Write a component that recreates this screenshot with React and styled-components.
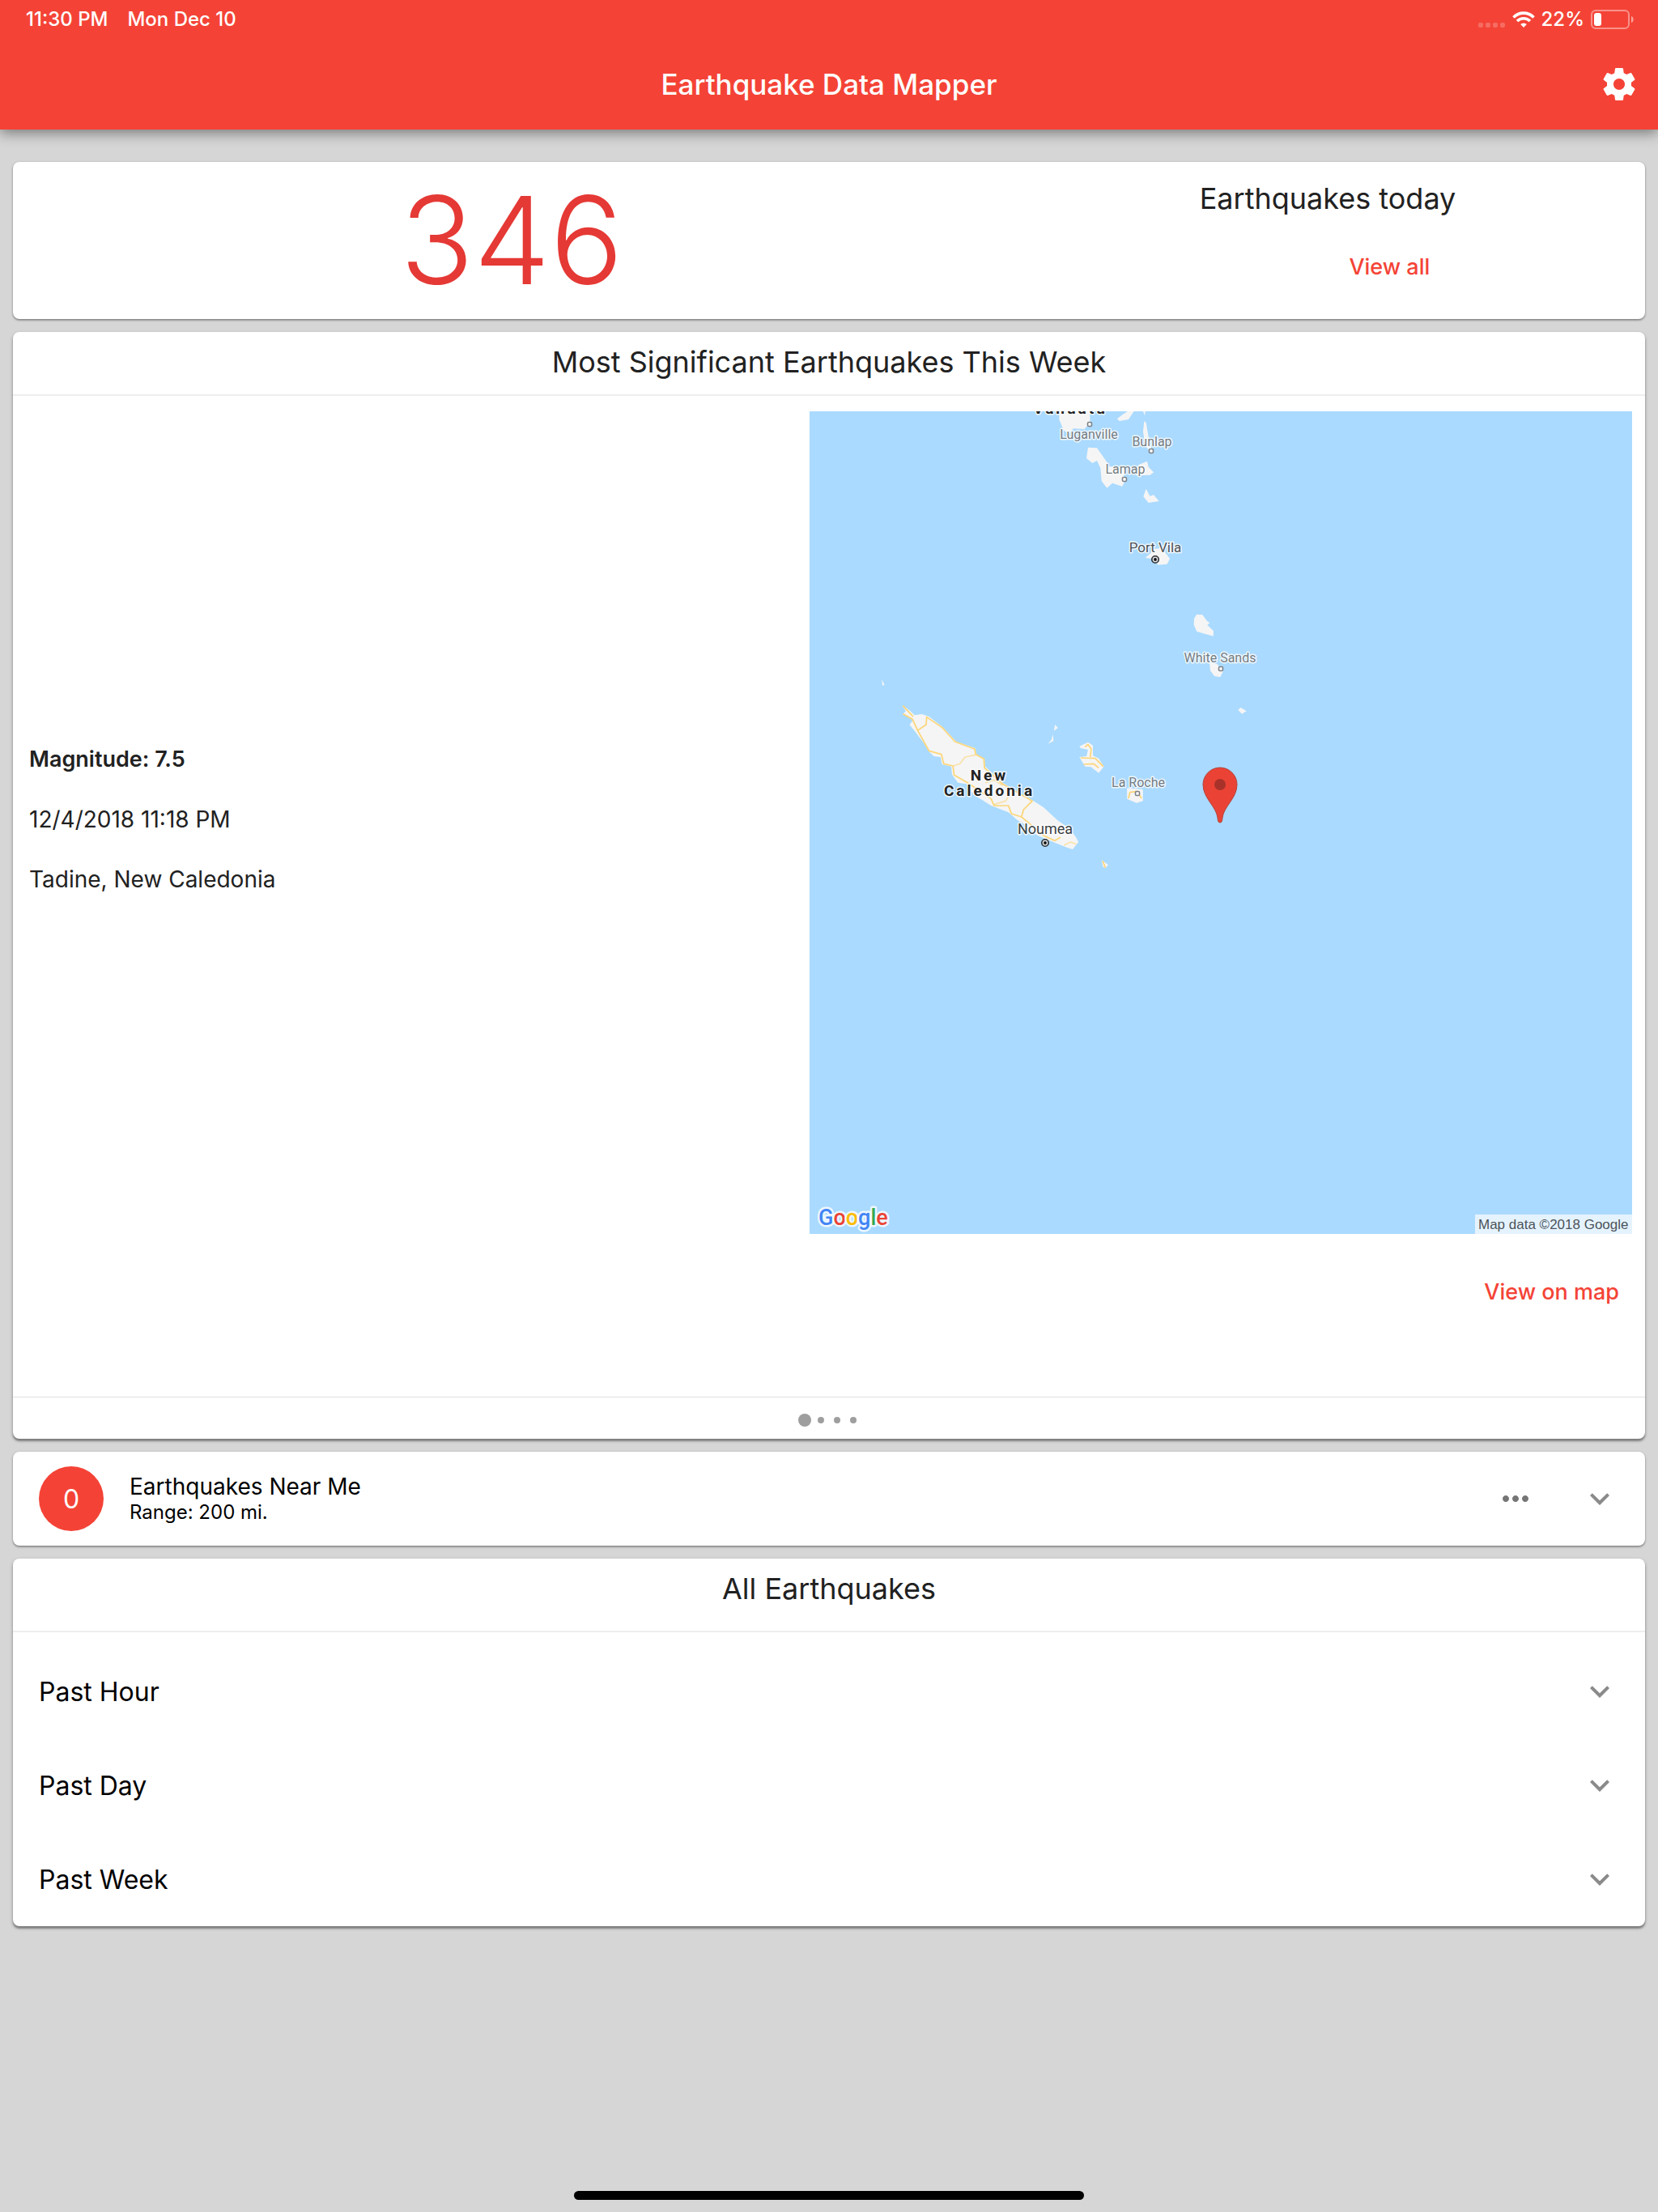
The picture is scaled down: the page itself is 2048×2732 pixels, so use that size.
import React, { useState } from "react";
import styled, { createGlobalStyle, css } from "styled-components";
import { MdExpandMore, MdMoreHoriz } from "react-icons/md";

const color = {
  primary: "#f44336",
  count: "#e53935",
  page: "#d6d6d6",
  card: "#ffffff",
  text: "#212121",
  divider: "#eeeeee",
  muted: "#9e9e9e",
};

const GlobalStyle = createGlobalStyle`
  *, *::before, *::after { box-sizing: border-box; }
  body {
    margin: 0;
    background: ${color.page};
    color: ${color.text};
    font-family: Inter, "Liberation Sans", sans-serif;
  }
  button {
    margin: 0;
    padding: 0;
    border: 0;
    background: none;
    color: inherit;
    font: inherit;
    text-align: left;
    cursor: pointer;
  }
`;

const Page = styled.div`
  display: flex;
  flex-direction: column;
  min-height: 100vh;
`;

const TopBar = styled.header`
  background: ${color.primary};
  color: #fff;
  box-shadow: 0 4px 16px rgba(0, 0, 0, 0.45);
`;

const StatusBar = styled.div`
  display: flex;
  align-items: center;
  justify-content: space-between;
  height: 48px;
  padding: 0 30px 0 32px;
  font-size: 24px;
  font-weight: 500;
  line-height: 48px;
`;

const StatusGroup = styled.div`
  display: flex;
  align-items: center;
  gap: ${(p) => p.$gap}px;
`;

const AppBar = styled.div`
  display: grid;
  grid-template-columns: 1fr auto 1fr;
  align-items: center;
  height: 112px;
  padding: 0 24px;
`;

const AppTitle = styled.h1`
  grid-column: 2;
  margin: 0;
  font-size: 35px;
  font-weight: 500;
  line-height: 48px;
`;

const IconButton = styled.button`
  display: flex;
  justify-self: end;
  color: ${(p) => p.$tone || "inherit"};
`;

const Cards = styled.main`
  display: flex;
  flex-direction: column;
  gap: 16px;
  padding: 40px 16px 16px;
`;

const shadows = {
  low: "0 1px 3px rgba(0, 0, 0, 0.35), 0 2px 2px rgba(0, 0, 0, 0.15)",
  high: "0 3px 2px rgba(0, 0, 0, 0.25), 0 2px 4px rgba(0, 0, 0, 0.3)",
};

const Card = styled.section`
  border-radius: 8px;
  background: ${color.card};
  box-shadow: ${(p) => shadows[p.$elevation || "low"]};
`;

const SummaryCard = styled(Card)`
  display: grid;
  grid-template-columns: 11fr 7fr;
  justify-items: center;
`;

const Count = styled.p`
  margin: 0;
  color: ${color.count};
  font-size: 150px;
  font-weight: 300;
  line-height: 194px;
`;

const SummaryText = styled.div`
  display: flex;
  flex-direction: column;
  align-items: flex-end;
  gap: 40px;
  padding-top: 24px;
`;

const titleText = css`
  margin: 0;
  font-size: 36px;
  font-weight: 400;
`;

const SummaryTitle = styled.h2`
  ${titleText}
  line-height: 42px;
`;

const TextButton = styled.button`
  padding: 0 ${(p) => p.$inset}px;
  color: ${color.primary};
  font-size: 27px;
  font-weight: 500;
  line-height: 48px;
`;

const CardTitle = styled.h2`
  ${titleText}
  padding-bottom: ${(p) => (p.$roomy ? 14 : 2)}px;
  border-bottom: 2px solid ${color.divider};
  line-height: 75px;
  text-align: center;
`;

const Slide = styled.div`
  display: grid;
  grid-template-columns: 241fr 254fr;
  align-items: center;
  padding: 19px 16px 105px 20px;
`;

const Details = styled.div`
  display: flex;
  flex-direction: column;
  gap: 40px;
  padding-bottom: 8px;
`;

const Detail = styled.p`
  margin: 0;
  font-size: ${(p) => (p.$strong ? 27 : 28)}px;
  font-weight: ${(p) => (p.$strong ? 600 : 400)};
  line-height: 34px;
`;

const MapSvg = styled.svg`
  display: block;
  width: 100%;
  height: auto;
`;

const SlideAction = styled.div`
  grid-column: 2;
  display: flex;
  justify-content: flex-end;
  padding-top: 48px;
`;

const Dots = styled.div`
  display: flex;
  align-items: center;
  justify-content: center;
  height: 52px;
  padding-top: 4px;
  border-top: 1px solid #e0e0e0;
`;

const DotButton = styled.button`
  display: flex;
  align-items: center;
  justify-content: center;
  width: 20px;
  height: 20px;

  &::before {
    content: "";
    width: ${(p) => (p.$active ? 16 : 8)}px;
    height: ${(p) => (p.$active ? 16 : 8)}px;
    border-radius: 50%;
    background: ${color.muted};
  }
`;

const NearCard = styled(Card)`
  display: flex;
  align-items: center;
  padding: 18px 32px;
  color: #000;
`;

const Badge = styled.span`
  display: flex;
  align-items: center;
  justify-content: center;
  width: 80px;
  height: 80px;
  margin-right: 32px;
  border-radius: 50%;
  background: ${color.primary};
  color: #fff;
  font-size: 32px;
`;

const NearText = styled.div`
  flex: 1;
`;

const NearTitle = styled.h2`
  margin: 0;
  font-size: 28px;
  font-weight: 400;
  line-height: 34px;
`;

const NearRange = styled.p`
  margin: 0;
  font-size: 24px;
  line-height: 30px;
`;

const NearActions = styled.div`
  display: flex;
  gap: 56px;
`;

const Rows = styled.div`
  padding-top: 15px;
`;

const Row = styled.button`
  display: flex;
  align-items: center;
  justify-content: space-between;
  width: 100%;
  height: 116px;
  padding: 0 32px;
  color: #000;
  font-size: 32px;
`;

const Chevron = styled(MdExpandMore)`
  color: #8a8a8a;
`;

const HomeIndicator = styled.div`
  align-self: center;
  width: 630px;
  max-width: 60%;
  height: 11px;
  margin: auto 0 15px;
  border-radius: 6px;
  background: #000;
`;

const Land = styled.path`
  fill: #f5f5f5;
`;

const Road = styled.path`
  fill: none;
  stroke: #fbd67a;
  stroke-width: 5;
  stroke-linejoin: round;
`;

const Label = styled.text`
  fill: ${(p) => p.$fill || "#757c82"};
  stroke: #fff;
  stroke-opacity: 0.8;
  stroke-width: 3px;
  stroke-linejoin: round;
  paint-order: stroke;
  font-family: Roboto, sans-serif;
  font-size: ${(p) => p.$size || 16}px;
  text-anchor: middle;
`;

const CountryLabel = styled(Label)`
  font-weight: 700;
  letter-spacing: 3px;
`;

const LogoText = styled(Label)`
  stroke-width: 5px;
  font-weight: 500;
  text-anchor: start;
`;

const Attribution = styled.text`
  fill: #4c5359;
  font-family: "Liberation Sans", Arial, sans-serif;
  font-size: 17px;
`;

const towns = [
  { name: "Luganville", x: 345, y: 34, mx: 346, my: 16 },
  { name: "Bunlap", x: 423, y: 43, mx: 422, my: 49 },
  { name: "Lamap", x: 390, y: 77, mx: 389, my: 84 },
  { name: "White Sands", x: 507, y: 310, mx: 508, my: 318 },
  { name: "La Roche", x: 406, y: 464, mx: 405, my: 472 },
];

const capitals = [
  { name: "Port Vila", x: 427, y: 174, my: 183, size: 17, fill: "#4d5256" },
  { name: "Noumea", x: 291, y: 522, my: 533, size: 18, fill: "#3a3f43" },
];

const logo = [
  ["G", "#4285f4"],
  ["o", "#ea4335"],
  ["o", "#fbbc05"],
  ["g", "#4285f4"],
  ["l", "#34a853"],
  ["e", "#ea4335"],
];

function EpicenterMap() {
  return (
    <MapSvg viewBox="0 0 1016 1016" role="img" aria-label="Map of the epicenter near New Caledonia">
      <rect width="1016" height="1016" fill="#aadaff" />
      <g transform="translate(240 -8) scale(0.33333)">
        <Land d="M205 24V55L222 95L240 105L258 88L298 90L320 66L318 24Z" />
        <Land d="M420 52L440 36L458 24H482L462 54L428 60Z M516 24H524L522 40Z" />
        <Land d="M520 60L527 66L538 130L548 165H534L522 140L516 100Z" />
        <Land d="M312 158L345 160L382 212L385 228L445 232V290L438 302L402 290L382 308L362 282L358 235L345 207L328 216L306 198Z" />
        <Land d="M500 222L531 209L536 230L555 250L542 260L490 262Z" />
        <Land d="M527 311L517 340L536 363L575 357L555 334L541 338Z" />
        <Land d="M524 567L545 548L550 535L585 530L600 550L615 570L605 590L572 593L550 570Z" />
        <Land d="M714 777L736 778L752 800L763 808L754 816L777 838L776 857L715 840L704 815L705 792Z" />
        <Land d="M762 955L765 985L780 1005L802 1009L812 988L790 960Z" />
        <Land d="M868 1130L878 1122L899 1135L882 1145Z" />
      </g>
      <g transform="translate(60 312) scale(0.35714 0.33333)">
        <Land d="M82 57L91 78L84 80Z" />
        <Land d="M681 225L691 237L677 248Z M673 260L676 285L657 296L669 280Z" />
        <Land d="M765 305L795 290L812 302V340L832 350L850 380L832 404L805 382L785 380L765 345L790 342L795 318L770 312Z" />
        <Land d="M930 460L985 465V508L963 515L930 500Z" />
        <Land d="M843 727L865 745L855 757L846 750Z" />
        <Land d="M152 153L178 172L195 190L220 186L245 195L290 232L340 288L405 312L410 335L437 352L440 380L500 440L560 480L600 503L640 530L690 580L725 605L752 640L762 660L742 687L722 680L680 662L620 635L570 590L552 580L520 550L460 525L430 505L400 485L375 445L345 440L325 410L322 380L290 372L285 345L262 342L245 325L225 290L200 255L178 225L190 208L155 185L165 175Z" />
        <Road d="M155 185L188 205L205 245L245 322L288 335L296 370L328 378L332 412L375 438L420 470L460 500L470 525L520 525L530 555L565 567L600 598L640 635L680 655L700 642" />
        <Road d="M155 155L190 195M205 247L235 225L237 197L290 235L335 288L403 315L407 335L435 352L437 385L500 445L560 482L602 508L572 540L565 567" />
        <Road d="M328 378L352 370L370 345L407 337M440 440L470 430L500 450M470 520L510 508L520 490M712 672L735 660L755 668" strokeOpacity="0.6" />
        <Road d="M770 348L820 350L848 380M803 345L806 315L795 298L785 308M780 372L815 370L832 385" />
        <Road d="M935 498L940 476L965 472L980 498M846 730L855 755" />
      </g>
      {towns.map((t) => (
        <g key={t.name}>
          <Label x={t.x} y={t.y}>{t.name}</Label>
          <rect x={t.mx - 2.5} y={t.my - 2.5} width="5" height="5" rx="1.5" fill="#fff" stroke="#7d8287" strokeWidth="1.6" />
        </g>
      ))}
      {capitals.map((c) => (
        <g key={c.name}>
          <Label x={c.x} y={c.y} $size={c.size} $fill={c.fill}>{c.name}</Label>
          <circle cx={c.x} cy={c.my} r="4.2" fill="#dfe3e6" stroke="#2b2f33" strokeWidth="1.6" />
          <circle cx={c.x} cy={c.my} r="1.9" fill="#111" />
        </g>
      ))}
      <CountryLabel x="322" y="3" $size={19} $fill="#222">Vanuatu</CountryLabel>
      <CountryLabel x="222" y="456" $size={19} $fill="#222">New</CountryLabel>
      <CountryLabel x="222" y="475" $size={19} $fill="#222">Caledonia</CountryLabel>
      <path
        d="M507 508C504.500 508 504.300 505 504 502C502.500 488 486 478 486 461A21 21 0 0 1 528 461C528 478 511.500 488 510 502C509.700 505 509.500 508 507 508Z"
        fill="#ea4335"
        stroke="#b5423a"
        strokeWidth="1"
      />
      <circle cx="507" cy="461" r="7" fill="#a8322a" />
      <LogoText x="11" y="1005" $size={27}>
        {logo.map(([letter, fill], i) => (
          <tspan key={i} fill={fill}>{letter}</tspan>
        ))}
      </LogoText>
      <rect x="822" y="992" width="194" height="24" fill="#e5f3ff" />
      <Attribution x="826" y="1010">Map data ©2018 Google</Attribution>
    </MapSvg>
  );
}

function SignalIcon() {
  return (
    <svg width="34" height="20" viewBox="0 0 34 20" fill="#fff" fillOpacity="0.22" aria-hidden="true">
      {[0, 9, 18, 27].map((x) => (
        <rect key={x} x={x} y="14" width="6" height="6" rx="2" />
      ))}
    </svg>
  );
}

function WifiIcon() {
  return (
    <svg width="28" height="20" viewBox="0 0 28 20" fill="none" stroke="#fff" strokeWidth="3.6" aria-hidden="true">
      <path d="M1.500 7.400A17.500 17.500 0 0 1 26.500 7.400" />
      <path d="M6 12A11.300 11.300 0 0 1 22 12" />
      <path d="M14 20L10.200 16A5.400 5.400 0 0 1 17.800 16Z" fill="#fff" stroke="none" />
    </svg>
  );
}

function BatteryIcon() {
  return (
    <svg width="53" height="24" viewBox="0 0 53 24" aria-hidden="true">
      <rect x="1" y="1" width="46" height="22" rx="5" fill="none" stroke="#fff" strokeOpacity="0.42" strokeWidth="2" />
      <path d="M50 8C53.500 9 53.500 15 50 16Z" fill="#fff" fillOpacity="0.5" />
      <rect x="4" y="4" width="9" height="16" rx="3" fill="#fff" />
    </svg>
  );
}

function SettingsIcon() {
  return (
    <svg width="48" height="48" viewBox="0 0 24 24" fill="#fff" aria-hidden="true">
      <path d="M19.430 12.980c.04-.32.07-.64.07-.98s-.03-.66-.07-.98l2.110-1.650c.19-.15.24-.42.12-.64l-2-3.460c-.12-.22-.39-.3-.61-.22l-2.490 1c-.52-.4-1.080-.73-1.690-.98l-.38-2.650C14.460 2.180 14.250 2 14 2h-4c-.25 0-.46.18-.49.42l-.38 2.650c-.61.25-1.170.59-1.690.98l-2.490-1c-.23-.09-.49 0-.61.22l-2 3.460c-.13.22-.07.49.12.64l2.110 1.650c-.04.32-.07.65-.07.98s.03.66.07.98l-2.110 1.650c-.19.15-.24.42-.12.64l2 3.460c.12.22.39.3.61.22l2.490-1c.52.4 1.080.73 1.690.98l.38 2.650c.03.24.24.42.49.42h4c.25 0 .46-.18.49-.42l.38-2.650c.61-.25 1.170-.59 1.690-.98l2.490 1c.23.09.49 0 .61-.22l2-3.460c.12-.22.07-.49-.12-.64l-2.110-1.650zM12 15.500c-1.930 0-3.500-1.570-3.500-3.500s1.570-3.500 3.500-3.500 3.500 1.570 3.500 3.500-1.570 3.500-3.500 3.500z" />
    </svg>
  );
}

const periods = ["Past Hour", "Past Day", "Past Week"];

export default function App() {
  const [slide, setSlide] = useState(0);

  return (
    <Page>
      <GlobalStyle />
      <TopBar>
        <StatusBar>
          <StatusGroup $gap={24}>
            <span>11:30 PM</span>
            <span>Mon Dec 10</span>
          </StatusGroup>
          <StatusGroup $gap={8}>
            <SignalIcon />
            <WifiIcon />
            <span>22%</span>
            <BatteryIcon />
          </StatusGroup>
        </StatusBar>
        <AppBar>
          <AppTitle>Earthquake Data Mapper</AppTitle>
          <IconButton type="button" aria-label="Settings">
            <SettingsIcon />
          </IconButton>
        </AppBar>
      </TopBar>

      <Cards>
        <SummaryCard>
          <Count>346</Count>
          <SummaryText>
            <SummaryTitle>Earthquakes today</SummaryTitle>
            <TextButton type="button" $inset={32}>View all</TextButton>
          </SummaryText>
        </SummaryCard>

        <Card $elevation="high">
          <CardTitle>Most Significant Earthquakes This Week</CardTitle>
          <Slide>
            <Details>
              <Detail $strong>Magnitude: 7.5</Detail>
              <Detail>12/4/2018 11:18 PM</Detail>
              <Detail>Tadine, New Caledonia</Detail>
            </Details>
            <EpicenterMap />
            <SlideAction>
              <TextButton type="button" $inset={16}>View on map</TextButton>
            </SlideAction>
          </Slide>
          <Dots>
            {[0, 1, 2, 3].map((i) => (
              <DotButton
                key={i}
                type="button"
                aria-label={`Slide ${i + 1}`}
                $active={i === slide}
                onClick={() => setSlide(i)}
              />
            ))}
          </Dots>
        </Card>

        <NearCard>
          <Badge>0</Badge>
          <NearText>
            <NearTitle>Earthquakes Near Me</NearTitle>
            <NearRange>Range: 200 mi.</NearRange>
          </NearText>
          <NearActions>
            <IconButton type="button" aria-label="More options" $tone="#757575">
              <MdMoreHoriz size={48} />
            </IconButton>
            <IconButton type="button" aria-label="Expand">
              <Chevron size={48} />
            </IconButton>
          </NearActions>
        </NearCard>

        <Card $elevation="high">
          <CardTitle $roomy>All Earthquakes</CardTitle>
          <Rows>
            {periods.map((period) => (
              <Row key={period} type="button" aria-expanded="false">
                <span>{period}</span>
                <Chevron size={48} />
              </Row>
            ))}
          </Rows>
        </Card>
      </Cards>
      <HomeIndicator />
    </Page>
  );
}
